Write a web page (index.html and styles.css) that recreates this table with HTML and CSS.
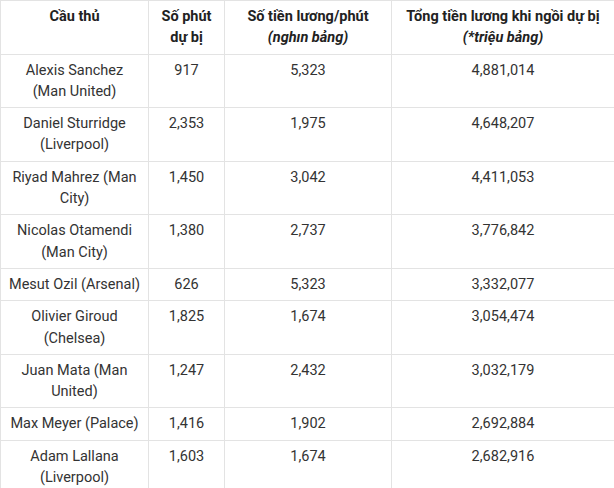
FILE: index.html
```html
<!DOCTYPE html>
<html lang="vi">
<head>
<meta charset="utf-8">
<link rel="stylesheet" href="styles.css">
</head>
<body>
<table class="salary">
  <colgroup>
    <col class="c1"><col class="c2"><col class="c3"><col class="c4">
  </colgroup>
  <thead>
    <tr>
      <th>Cầu thủ</th>
      <th>Số phút dự bị</th>
      <th>Số tiền lương/phút <em>(nghın bảng)</em></th>
      <th>Tổng tiền lương khi ngồi dự bị <em>(*triệu bảng)</em></th>
    </tr>
  </thead>
  <tbody>
    <tr><td>Alexis Sanchez (Man United)</td><td>917</td><td>5,323</td><td>4,881,014</td></tr>
    <tr><td>Daniel Sturridge (Liverpool)</td><td>2,353</td><td>1,975</td><td>4,648,207</td></tr>
    <tr><td>Riyad Mahrez (Man City)</td><td>1,450</td><td>3,042</td><td>4,411,053</td></tr>
    <tr><td>Nicolas Otamendi (Man City)</td><td>1,380</td><td>2,737</td><td>3,776,842</td></tr>
    <tr><td>Mesut Ozil (Arsenal)</td><td>626</td><td>5,323</td><td>3,332,077</td></tr>
    <tr><td>Olivier Giroud (Chelsea)</td><td>1,825</td><td>1,674</td><td>3,054,474</td></tr>
    <tr><td>Juan Mata (Man United)</td><td>1,247</td><td>2,432</td><td>3,032,179</td></tr>
    <tr><td>Max Meyer (Palace)</td><td>1,416</td><td>1,902</td><td>2,692,884</td></tr>
    <tr><td>Adam Lallana (Liverpool)</td><td>1,603</td><td>1,674</td><td>2,682,916</td></tr>
  </tbody>
</table>
</body>
</html>
```

FILE: styles.css
```css
html, body {
  margin: 0;
  padding: 0;
  background: #fff;
}
body {
  font-family: Roboto, "Noto Sans", sans-serif;
  font-size: 14.5px;
  line-height: 21.3px;
  color: #333;
}
.salary {
  border-collapse: collapse;
  table-layout: fixed;
  width: 614px;
}
.c1 { width: 148px; }
.c2 { width: 76px; }
.c3 { width: 167px; }
.c4 { width: 223px; }
.salary th,
.salary td {
  border: 1px solid #e3e3e3;
  padding: 5px 7px;
  text-align: center;
  vertical-align: top;
}
.salary th {
  font-weight: 700;
  color: #222;
}
.salary th em {
  display: block;
  font-style: italic;
}
```
